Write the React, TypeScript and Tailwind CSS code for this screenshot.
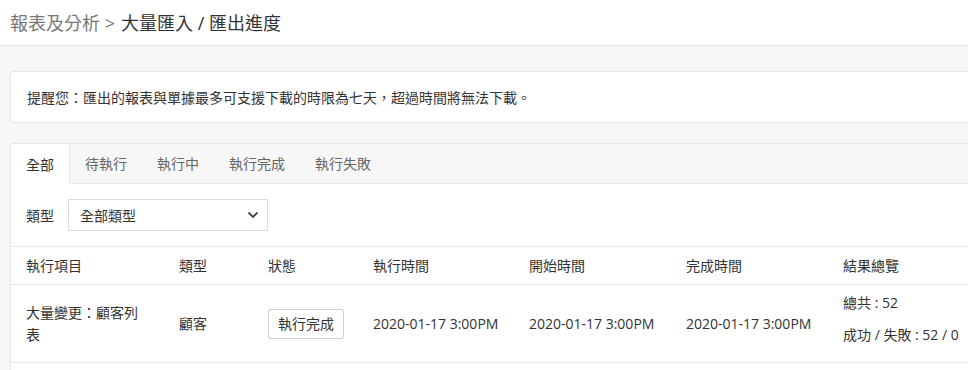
import React from "react";

const font = { fontFamily: '"Open Sans", "Noto Sans CJK TC", sans-serif' };

export default function App() {
  const tabs = ["全部", "待執行", "執行中", "執行完成", "執行失敗"];
  return (
    <div className="w-[968px] h-[370px] overflow-hidden bg-[#f7f7f7] text-[#333]" style={font}>
      <div className="h-[46px] bg-white border-b border-[#e6e6e6] flex items-center pl-[10px] text-[18px] leading-none">
        <span className="text-[#777]">報表及分析 &gt;</span>
        <span className="ml-[6px] text-[#333]">大量匯入 / 匯出進度</span>
      </div>
      <div className="w-[1040px] pl-[10px] pt-[25px]">
        <div className="h-[52px] bg-white border border-[#e5e5e5] rounded-[4px] flex items-center pl-[16px] text-[14px]">
          提醒您：匯出的報表與單據最多可支援下載的時限為七天，超過時間將無法下載。
        </div>
        <div className="mt-[20px] bg-white border border-[#e5e5e5] rounded-t-[4px]">
          <div className="flex h-[40px] bg-[#f7f7f7] border-b border-[#e5e5e5] text-[14px]">
            {tabs.map((t, i) =>
              i === 0 ? (
                <div key={t} className="px-[15px] flex items-center bg-white border-r border-[#e5e5e5] h-[40px] rounded-tl-[4px] text-[#333]">
                  {t}
                </div>
              ) : (
                <div key={t} className="px-[15px] flex items-center text-[#666]">
                  {t}
                </div>
              )
            )}
          </div>
          <div className="flex items-center h-[62px] pl-[15px] text-[14px]">
            <span className="text-[#333]">類型</span>
            <div className="ml-[14px] w-[200px] h-[32px] border border-[#dcdcdc] flex items-center justify-between pl-[11px] pr-[8px]">
              <span>全部類型</span>
              <svg width="12" height="8" viewBox="0 0 12 8" fill="none">
                <path d="M1.5 1.5 L6 6 L10.5 1.5" stroke="#444" strokeWidth="1.8" />
              </svg>
            </div>
          </div>
          <table className="table-fixed border-collapse text-[14px] w-[1030px]">
            <colgroup>
              <col className="w-[153px]" />
              <col className="w-[89px]" />
              <col className="w-[105px]" />
              <col className="w-[156px]" />
              <col className="w-[157px]" />
              <col className="w-[157px]" />
              <col />
            </colgroup>
            <thead>
              <tr className="h-[38px] border-t border-b border-[#e5e5e5] text-left">
                {["執行項目", "類型", "狀態", "執行時間", "開始時間", "完成時間", "結果總覽"].map((h) => (
                  <th key={h} className="font-normal px-[15px] text-[#333] p-0">
                    {h}
                  </th>
                ))}
              </tr>
            </thead>
            <tbody>
              <tr className="h-[78px] border-b border-[#e5e5e5]">
                <td className="px-[15px] leading-[22px]">大量變更：顧客列表</td>
                <td className="px-[15px]">顧客</td>
                <td className="px-[15px]">
                  <span className="inline-flex items-center whitespace-nowrap h-[30px] px-[9px] border border-[#cfcfcf] rounded-[2px]">執行完成</span>
                </td>
                <td className="px-[15px] whitespace-nowrap">2020-01-17 3:00PM</td>
                <td className="px-[15px] whitespace-nowrap">2020-01-17 3:00PM</td>
                <td className="px-[15px] whitespace-nowrap">2020-01-17 3:00PM</td>
                <td className="px-[15px] pb-[9px] whitespace-nowrap">
                  <div className="leading-[20px]">總共 : 52</div>
                  <div className="leading-[20px] mt-[12px]">成功 / 失敗 : 52 / 0</div>
                </td>
              </tr>
            </tbody>
          </table>
          <div className="h-[40px]" />
        </div>
      </div>
    </div>
  );
}
